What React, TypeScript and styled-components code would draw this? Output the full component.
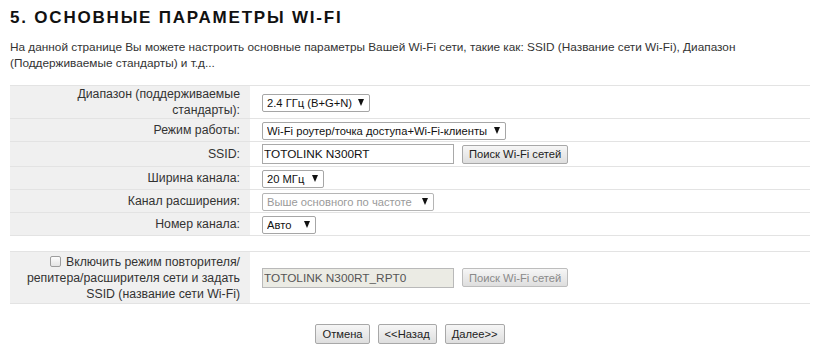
import React from "react";
import styled, { createGlobalStyle } from "styled-components";

const Global = createGlobalStyle`
  html, body { margin: 0; padding: 0; background: #fff; }
  body { font-family: "Liberation Sans", Arial, sans-serif; color: #333; }
`;

const Page = styled.div`
  padding: 0 5px 0 10px;
`;

const Title = styled.h1`
  margin: 8px 0 0;
  font-size: 17px;
  line-height: 20px;
  font-weight: bold;
  letter-spacing: 1.8px;
  color: #111;
`;

const Intro = styled.p`
  margin: 11px 0 0;
  font-size: 11.8px;
  line-height: 16px;
  color: #333;
  width: 790px;
`;

const Table = styled.div`
  margin-top: 14px;
  border-top: 1px solid #e3e3e3;
`;

const Row = styled.div<{ $h: number }>`
  display: grid;
  grid-template-columns: 240px 1fr;
  height: ${(p) => p.$h}px;
  border-bottom: 1px solid #e3e3e3;
`;

const Label = styled.div<{ $blank?: boolean }>`
  background: ${(p) => (p.$blank ? "#fff" : "#f0f0f0")};
  display: flex;
  align-items: center;
  justify-content: flex-end;
  text-align: right;
  padding-right: 10px;
  font-size: 12.3px;
  line-height: 16px;
  color: #333;
`;

const Value = styled.div`
  display: flex;
  align-items: center;
  gap: 8px;
  padding-left: 12px;
`;

const SelectWrap = styled.span<{ $w: number }>`
  position: relative;
  display: inline-block;
  width: ${(p) => p.$w}px;
  height: 18px;
  &::after {
    content: "";
    position: absolute;
    right: 6px;
    top: 6px;
    border-left: 3.5px solid transparent;
    border-right: 3.5px solid transparent;
    border-top: 7px solid #111;
    pointer-events: none;
  }
`;

const Select = styled.select`
  appearance: none;
  -webkit-appearance: none;
  box-sizing: border-box;
  width: 100%;
  height: 18px;
  margin: 0;
  padding: 0 0 0 4px;
  border: 1px solid #a6a6a6;
  border-radius: 2px;
  background: #fff;
  font-family: "Liberation Sans", Arial, sans-serif;
  font-size: 11.2px;
  color: #111;
  &:disabled {
    color: #9a9a9a;
    opacity: 1;
    border-color: #b5b5b5;
  }
`;

const TextInput = styled.input`
  box-sizing: border-box;
  width: 192px;
  height: 20px;
  margin: 0;
  padding: 0 1px;
  border: 1px solid #a9a9a9;
  font-family: "Liberation Sans", Arial, sans-serif;
  font-size: 11.8px;
  color: #111;
  background: #fff;
  &:disabled {
    background: #ebebe4;
    border-color: #b9b9b9;
    color: #555;
  }
`;

const Button = styled.button<{ $h?: number }>`
  box-sizing: border-box;
  height: ${(p) => p.$h ?? 19}px;
  margin: 0;
  padding: 0 6px;
  border: 1px solid #a8a8a8;
  border-radius: 2px;
  background: linear-gradient(#f6f6f6, #dedede);
  font-family: "Liberation Sans", Arial, sans-serif;
  font-size: 11.2px;
  color: #222;
  &:disabled {
    color: #8a8a8a;
    border-color: #bdbdbd;
  }
`;

const Check = styled.input`
  appearance: none;
  -webkit-appearance: none;
  width: 11px;
  height: 11px;
  margin: 0 5px 2px 0;
  border: 1px solid #9d9d9d;
  border-radius: 2px;
  background: linear-gradient(#fdfdfd, #e4e4e4);
  vertical-align: middle;
`;

const Actions = styled.div`
  display: flex;
  justify-content: center;
  gap: 8px;
  margin: 20px 0 0 0;
`;

export default function App() {
  return (
    <>
      <Global />
      <Page>
        <Title>5. ОСНОВНЫЕ ПАРАМЕТРЫ WI-FI</Title>
        <Intro>
          На данной странице Вы можете настроить основные параметры Вашей Wi-Fi сети, такие как: SSID (Название сети
          Wi-Fi), Диапазон (Поддерживаемые стандарты) и т.д...
        </Intro>
        <Table>
          <Row $h={32}>
            <Label>
              Диапазон (поддерживаемые
              <br />
              стандарты):
            </Label>
            <Value>
              <SelectWrap $w={108}>
                <Select defaultValue="a">
                  <option value="a">2.4 ГГц (B+G+N)</option>
                </Select>
              </SelectWrap>
            </Value>
          </Row>
          <Row $h={22}>
            <Label>Режим работы:</Label>
            <Value>
              <SelectWrap $w={244}>
                <Select defaultValue="a">
                  <option value="a">Wi-Fi роутер/точка доступа+Wi-Fi-клиенты</option>
                </Select>
              </SelectWrap>
            </Value>
          </Row>
          <Row $h={24}>
            <Label>SSID:</Label>
            <Value>
              <TextInput defaultValue="TOTOLINK N300RT" />
              <Button>Поиск Wi-Fi сетей</Button>
            </Value>
          </Row>
          <Row $h={22}>
            <Label>Ширина канала:</Label>
            <Value>
              <SelectWrap $w={62}>
                <Select defaultValue="a">
                  <option value="a">20 МГц</option>
                </Select>
              </SelectWrap>
            </Value>
          </Row>
          <Row $h={22}>
            <Label>Канал расширения:</Label>
            <Value>
              <SelectWrap $w={172}>
                <Select defaultValue="a" disabled>
                  <option value="a">Выше основного по частоте</option>
                </Select>
              </SelectWrap>
            </Value>
          </Row>
          <Row $h={22}>
            <Label>Номер канала:</Label>
            <Value>
              <SelectWrap $w={54}>
                <Select defaultValue="a">
                  <option value="a">Авто</option>
                </Select>
              </SelectWrap>
            </Value>
          </Row>
          <Row $h={15}>
            <Label $blank />
            <Value />
          </Row>
          <Row $h={51}>
            <Label>
              <span>
                <Check type="checkbox" />
                Включить режим повторителя/
                <br />
                репитера/расширителя сети и задать
                <br />
                SSID (название сети Wi-Fi)
              </span>
            </Label>
            <Value>
              <TextInput defaultValue="TOTOLINK N300RT_RPT0" disabled />
              <Button disabled>Поиск Wi-Fi сетей</Button>
            </Value>
          </Row>
        </Table>
        <Actions>
          <Button $h={20}>Отмена</Button>
          <Button $h={20}>&lt;&lt;Назад</Button>
          <Button $h={20}>Далее&gt;&gt;</Button>
        </Actions>
      </Page>
    </>
  );
}
